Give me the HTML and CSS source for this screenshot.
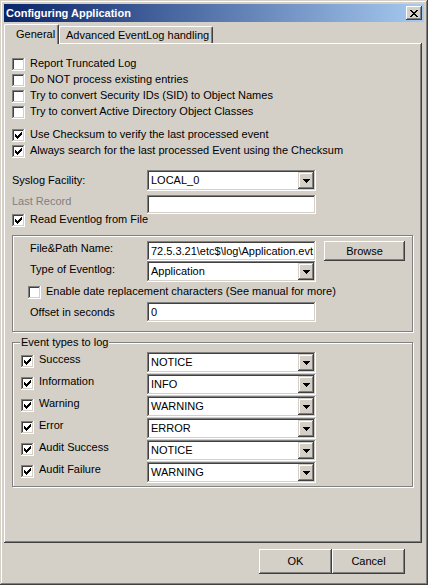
FILE: index.html
```html
<!DOCTYPE html>
<html>
<head>
<meta charset="utf-8">
<link rel="stylesheet" href="styles.css">
</head>
<body>
<div class="win">
  <div class="title">
    <span class="title-text">Configuring Application</span>
    <span class="close"><svg width="8" height="7" viewBox="0 0 8 7" shape-rendering="crispEdges"><path d="M0 0h2v1h-2z M6 0h2v1h-2z M1 1h2v1h-2z M5 1h2v1h-2z M2 2h4v1h-4z M3 3h2v1h-2z M2 4h4v1h-4z M1 5h2v1h-2z M5 5h2v1h-2z M0 6h2v1h-2z M6 6h2v1h-2z"/></svg></span>
  </div>
  <div class="tabs">
    <div class="tab sel">General</div>
    <div class="tab adv">Advanced EventLog handling</div>
  </div>
  <div class="panel">
    <div class="chk"><span class="cb"></span><span class="lb">Report Truncated Log</span></div>
    <div class="chk"><span class="cb"></span><span class="lb">Do NOT process existing entries</span></div>
    <div class="chk"><span class="cb"></span><span class="lb">Try to convert Security IDs (SID) to Object Names</span></div>
    <div class="chk"><span class="cb"></span><span class="lb">Try to convert Active Directory Object Classes</span></div>
    <div class="chk gap7"><span class="cb on"><svg class="ck" width="7" height="7" viewBox="0 0 7 7" shape-rendering="crispEdges"><path d="M6 0h1v1h-1z M5 1h2v1h-2z M0 2h1v1h-1z M4 2h3v1h-3z M0 3h2v1h-2z M3 3h3v1h-3z M0 4h5v1h-5z M1 5h3v1h-3z M2 6h1v1h-1z"/></svg></span><span class="lb">Use Checksum to verify the last processed event</span></div>
    <div class="chk"><span class="cb on"><svg class="ck" width="7" height="7" viewBox="0 0 7 7" shape-rendering="crispEdges"><path d="M6 0h1v1h-1z M5 1h2v1h-2z M0 2h1v1h-1z M4 2h3v1h-3z M0 3h2v1h-2z M3 3h3v1h-3z M0 4h5v1h-5z M1 5h3v1h-3z M2 6h1v1h-1z"/></svg></span><span class="lb">Always search for the last processed Event using the Checksum</span></div>

    <div class="row syslog">
      <span class="flabel w135 m4">Syslog Facility:</span>
      <div class="combo"><span class="ctext">LOCAL_0</span><span class="arrow"><svg width="7" height="4" viewBox="0 0 7 4" shape-rendering="crispEdges"><path d="M0 0h7v1h-7z M1 1h5v1h-5z M2 2h3v1h-3z M3 3h1v1h-1z"/></svg></span></div>
    </div>
    <div class="row lastrec">
      <span class="flabel w135 disabled">Last Record</span>
      <div class="edit h19"></div>
    </div>
    <div class="chk readrow"><span class="cb on"><svg class="ck" width="7" height="7" viewBox="0 0 7 7" shape-rendering="crispEdges"><path d="M6 0h1v1h-1z M5 1h2v1h-2z M0 2h1v1h-1z M4 2h3v1h-3z M0 3h2v1h-2z M3 3h3v1h-3z M0 4h5v1h-5z M1 5h3v1h-3z M2 6h1v1h-1z"/></svg></span><span class="lb">Read Eventlog from File</span></div>

    <div class="group g1">
      <div class="row frow">
        <span class="flabel w117 m1">File&amp;Path Name:</span>
        <div class="edit path"><span class="ptext">72.5.3.21\etc$\log\Application.evt</span></div>
        <div class="btn browse">Browse</div>
      </div>
      <div class="row trow">
        <span class="flabel w117 m2">Type of Eventlog:</span>
        <div class="combo"><span class="ctext">Application</span><span class="arrow"><svg width="7" height="4" viewBox="0 0 7 4" shape-rendering="crispEdges"><path d="M0 0h7v1h-7z M1 1h5v1h-5z M2 2h3v1h-3z M3 3h1v1h-1z"/></svg></span></div>
      </div>
      <div class="chk enrow"><span class="cb"></span><span class="lb">Enable date replacement characters (See manual for more)</span></div>
      <div class="row orow">
        <span class="flabel w117 m4">Offset in seconds</span>
        <div class="edit"><span class="etext">0</span></div>
      </div>
    </div>

    <div class="group g2">
      <span class="legend">Event types to log</span>
      <div class="erow">
        <div class="echk"><span class="cb on"><svg class="ck" width="7" height="7" viewBox="0 0 7 7" shape-rendering="crispEdges"><path d="M6 0h1v1h-1z M5 1h2v1h-2z M0 2h1v1h-1z M4 2h3v1h-3z M0 3h2v1h-2z M3 3h3v1h-3z M0 4h5v1h-5z M1 5h3v1h-3z M2 6h1v1h-1z"/></svg></span><span class="lb">Success</span></div>
        <div class="combo"><span class="ctext">NOTICE</span><span class="arrow"><svg width="7" height="4" viewBox="0 0 7 4" shape-rendering="crispEdges"><path d="M0 0h7v1h-7z M1 1h5v1h-5z M2 2h3v1h-3z M3 3h1v1h-1z"/></svg></span></div>
      </div>
      <div class="erow">
        <div class="echk"><span class="cb on"><svg class="ck" width="7" height="7" viewBox="0 0 7 7" shape-rendering="crispEdges"><path d="M6 0h1v1h-1z M5 1h2v1h-2z M0 2h1v1h-1z M4 2h3v1h-3z M0 3h2v1h-2z M3 3h3v1h-3z M0 4h5v1h-5z M1 5h3v1h-3z M2 6h1v1h-1z"/></svg></span><span class="lb">Information</span></div>
        <div class="combo"><span class="ctext">INFO</span><span class="arrow"><svg width="7" height="4" viewBox="0 0 7 4" shape-rendering="crispEdges"><path d="M0 0h7v1h-7z M1 1h5v1h-5z M2 2h3v1h-3z M3 3h1v1h-1z"/></svg></span></div>
      </div>
      <div class="erow">
        <div class="echk"><span class="cb on"><svg class="ck" width="7" height="7" viewBox="0 0 7 7" shape-rendering="crispEdges"><path d="M6 0h1v1h-1z M5 1h2v1h-2z M0 2h1v1h-1z M4 2h3v1h-3z M0 3h2v1h-2z M3 3h3v1h-3z M0 4h5v1h-5z M1 5h3v1h-3z M2 6h1v1h-1z"/></svg></span><span class="lb">Warning</span></div>
        <div class="combo"><span class="ctext">WARNING</span><span class="arrow"><svg width="7" height="4" viewBox="0 0 7 4" shape-rendering="crispEdges"><path d="M0 0h7v1h-7z M1 1h5v1h-5z M2 2h3v1h-3z M3 3h1v1h-1z"/></svg></span></div>
      </div>
      <div class="erow">
        <div class="echk"><span class="cb on"><svg class="ck" width="7" height="7" viewBox="0 0 7 7" shape-rendering="crispEdges"><path d="M6 0h1v1h-1z M5 1h2v1h-2z M0 2h1v1h-1z M4 2h3v1h-3z M0 3h2v1h-2z M3 3h3v1h-3z M0 4h5v1h-5z M1 5h3v1h-3z M2 6h1v1h-1z"/></svg></span><span class="lb">Error</span></div>
        <div class="combo"><span class="ctext">ERROR</span><span class="arrow"><svg width="7" height="4" viewBox="0 0 7 4" shape-rendering="crispEdges"><path d="M0 0h7v1h-7z M1 1h5v1h-5z M2 2h3v1h-3z M3 3h1v1h-1z"/></svg></span></div>
      </div>
      <div class="erow">
        <div class="echk"><span class="cb on"><svg class="ck" width="7" height="7" viewBox="0 0 7 7" shape-rendering="crispEdges"><path d="M6 0h1v1h-1z M5 1h2v1h-2z M0 2h1v1h-1z M4 2h3v1h-3z M0 3h2v1h-2z M3 3h3v1h-3z M0 4h5v1h-5z M1 5h3v1h-3z M2 6h1v1h-1z"/></svg></span><span class="lb">Audit Success</span></div>
        <div class="combo"><span class="ctext">NOTICE</span><span class="arrow"><svg width="7" height="4" viewBox="0 0 7 4" shape-rendering="crispEdges"><path d="M0 0h7v1h-7z M1 1h5v1h-5z M2 2h3v1h-3z M3 3h1v1h-1z"/></svg></span></div>
      </div>
      <div class="erow">
        <div class="echk"><span class="cb on"><svg class="ck" width="7" height="7" viewBox="0 0 7 7" shape-rendering="crispEdges"><path d="M6 0h1v1h-1z M5 1h2v1h-2z M0 2h1v1h-1z M4 2h3v1h-3z M0 3h2v1h-2z M3 3h3v1h-3z M0 4h5v1h-5z M1 5h3v1h-3z M2 6h1v1h-1z"/></svg></span><span class="lb">Audit Failure</span></div>
        <div class="combo"><span class="ctext">WARNING</span><span class="arrow"><svg width="7" height="4" viewBox="0 0 7 4" shape-rendering="crispEdges"><path d="M0 0h7v1h-7z M1 1h5v1h-5z M2 2h3v1h-3z M3 3h1v1h-1z"/></svg></span></div>
      </div>
    </div>
  </div>
  <div class="footer">
    <div class="btn ok">OK</div>
    <div class="btn cancel">Cancel</div>
  </div>
</div>
</body>
</html>
```
FILE: styles.css
```css
* { box-sizing: border-box; }
html, body { margin: 0; padding: 0; }
body {
  background: #d4d0c8;
  font-family: "Liberation Sans", Arial, sans-serif;
  font-size: 11px;
  color: #000;
}
.win {
  width: 428px;
  height: 585px;
  padding: 4px;
  background: #d4d0c8;
  box-shadow: inset -1px -1px 0 #404040, inset 1px 1px 0 #d4d0c8, inset -2px -2px 0 #808080, inset 2px 2px 0 #ffffff;
}
.title {
  height: 18px;
  display: flex;
  align-items: center;
  justify-content: space-between;
  padding: 0 2px 0 2px;
  background: linear-gradient(to right, #0a246a, #a6caf0);
  color: #fff;
  font-weight: bold;
  font-size: 11px;
}
.title-text { line-height: 13px; }
.close {
  width: 16px;
  height: 14px;
  display: flex;
  align-items: center;
  justify-content: center;
  background: #d4d0c8;
  box-shadow: inset -1px -1px 0 #404040, inset 1px 1px 0 #ffffff, inset -2px -2px 0 #808080, inset 2px 2px 0 #d4d0c8;
}
.close svg { fill: #000; display: block; }

.tabs {
  height: 21px;
  display: flex;
  align-items: flex-end;
}
.tab {
  height: 17px;
  line-height: 13px;
  padding: 2px 0 0 6px;
  background: #d4d0c8;
  border-top: 1px solid #fff;
  border-left: 1px solid #fff;
  border-right: 1px solid #404040;
  border-radius: 2px 2px 0 0;
  box-shadow: inset -1px 0 0 #808080;
  white-space: nowrap;
}
.tab.sel {
  width: 55px;
  height: 20px;
  padding: 3px 0 0 11px;
  margin-bottom: -1px;
  position: relative;
  z-index: 1;
}
.tab.adv { width: 154px; }

.panel {
  width: 418px;
  height: 500px;
  padding: 14px 0 0 8px;
  box-shadow: inset -1px -1px 0 #404040, inset 1px 1px 0 #ffffff, inset -2px -2px 0 #808080, inset 2px 2px 0 #d4d0c8;
}

.chk {
  display: flex;
  height: 16px;
  white-space: nowrap;
}
.chk .cb { margin-top: 1px; }
.lb {
  line-height: 13px;
  margin-left: 5px;
}
.gap7 { margin-top: 7px; }
.readrow { margin-top: -1px; }

.cb {
  flex: none;
  width: 13px;
  height: 13px;
  background: #fff;
  position: relative;
  box-shadow: inset -1px -1px 0 #ffffff, inset 1px 1px 0 #808080, inset -2px -2px 0 #d4d0c8, inset 2px 2px 0 #404040;
}
.cb .ck {
  display: block;
  fill: #000;
  margin: 3px 0 0 3px;
}

.row { display: flex; align-items: flex-start; }
.syslog { margin-top: 10px; }
.lastrec { margin-top: 4px; }
.flabel { line-height: 13px; white-space: nowrap; flex: none; }
.w135 { width: 135px; }
.w117 { width: 117px; }
.m1 { margin-top: 1px; }
.m2 { margin-top: 2px; }
.m4 { margin-top: 4px; }
.disabled { color: #808080; }

.combo {
  width: 169px;
  height: 21px;
  flex: none;
  display: flex;
  align-items: center;
  justify-content: space-between;
  padding: 2px 2px 2px 4px;
  background: #fff;
  box-shadow: inset -1px -1px 0 #ffffff, inset 1px 1px 0 #808080, inset -2px -2px 0 #d4d0c8, inset 2px 2px 0 #404040;
}
.ctext { line-height: 13px; white-space: nowrap; }
.arrow {
  width: 16px;
  height: 17px;
  display: flex;
  align-items: center;
  justify-content: center;
  background: #d4d0c8;
  box-shadow: inset -1px -1px 0 #404040, inset 1px 1px 0 #d4d0c8, inset -2px -2px 0 #808080, inset 2px 2px 0 #ffffff;
}
.arrow svg { display: block; fill: #000; }

.edit {
  width: 169px;
  height: 20px;
  flex: none;
  display: flex;
  align-items: center;
  padding: 0 2px 0 4px;
  background: #fff;
  overflow: hidden;
  box-shadow: inset -1px -1px 0 #ffffff, inset 1px 1px 0 #808080, inset -2px -2px 0 #d4d0c8, inset 2px 2px 0 #404040;
}
.edit.h19 { height: 19px; }
.edit.path { justify-content: flex-end; padding: 0 3px 0 2px; }
.ptext, .etext { white-space: nowrap; line-height: 13px; }

.btn {
  display: flex;
  align-items: center;
  justify-content: center;
  background: #d4d0c8;
  box-shadow: inset -1px -1px 0 #404040, inset 1px 1px 0 #ffffff, inset -2px -2px 0 #808080, inset 2px 2px 0 #d4d0c8;
  line-height: 13px;
}
.browse {
  width: 81px;
  height: 20px;
  margin-left: 8px;
}

.group {
  width: 401px;
  border: 1px solid #808080;
  box-shadow: inset 1px 1px 0 #ffffff, 1px 1px 0 #ffffff;
  position: relative;
}
.g1 {
  height: 97px;
  margin-top: 6px;
  padding: 5px 0 0 17px;
}
.trow { margin-top: 0; }
.enrow { margin-top: 3px; margin-left: -2px; }
.orow { margin-top: 1px; }

.g2 {
  height: 145px;
  margin-top: 10px;
  padding: 9px 0 0 8px;
}
.legend {
  position: absolute;
  left: 7px;
  top: -7px;
  padding: 0 1px;
  line-height: 13px;
  background: #d4d0c8;
  white-space: nowrap;
}
.erow {
  display: flex;
  height: 21px;
  margin-bottom: 1px;
}
.echk {
  width: 126px;
  display: flex;
  flex: none;
  white-space: nowrap;
}
.echk .cb { margin-top: 3px; }
.echk .lb { margin-top: 1px; }

.footer {
  display: flex;
  justify-content: flex-end;
  margin-top: 6px;
  padding-right: 19px;
}
.footer .btn {
  width: 73px;
  height: 25px;
}
```
